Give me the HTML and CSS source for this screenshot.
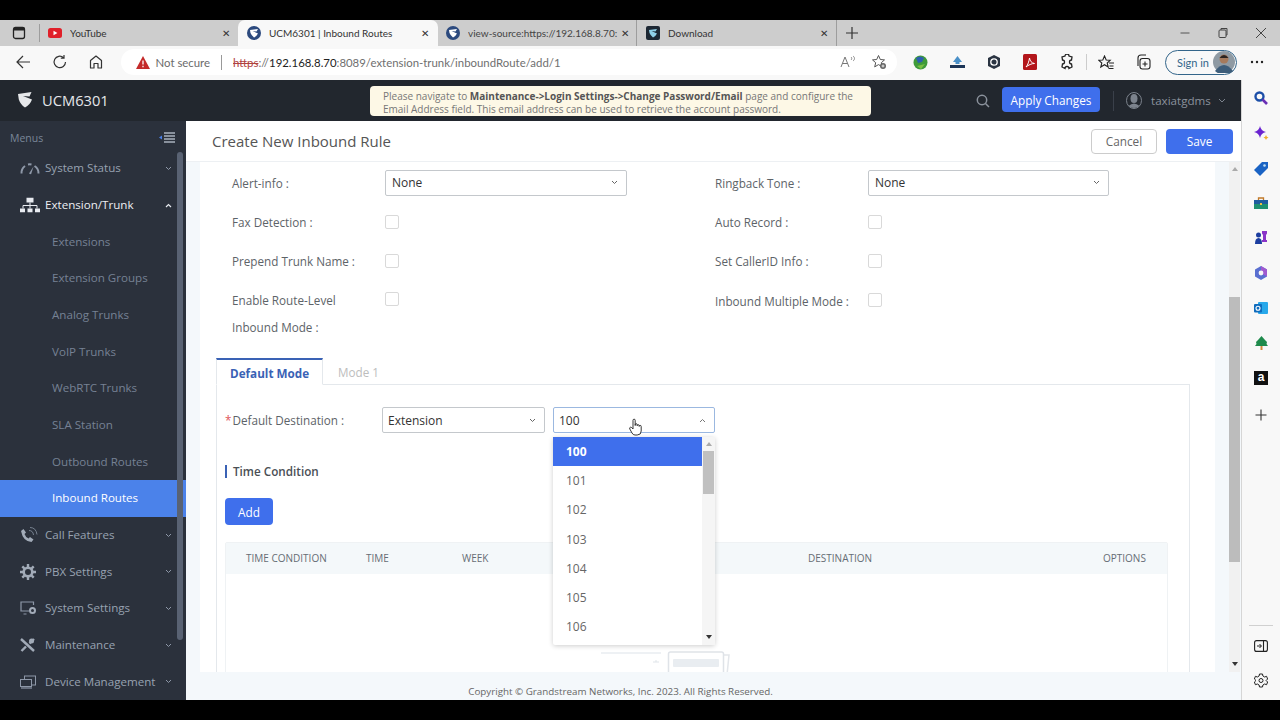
FILE: index.html
```html
<!DOCTYPE html>
<html lang="en">
<head>
    <meta charset="UTF-8">
    <title>UCM6301 | Inbound Routes</title>
    <link rel="stylesheet" href="styles.css">
</head>
<body>
<div class="browser">
    <!-- tab strip -->
    <div class="tabstrip">
        <div class="tab-menu">
            <svg width="14" height="14" viewBox="0 0 14 14"><rect x="1.5" y="1.5" width="11" height="11" rx="2" fill="none" stroke="#222" stroke-width="1.3"/><rect x="1.5" y="1.5" width="11" height="3" fill="#222"/></svg>
        </div>
        <div class="tab tab-first">
            <svg class="tab-icon" width="14" height="14" viewBox="0 0 14 14"><rect y="2" width="14" height="10" rx="2.5" fill="#e0202a"/><path d="M5.5 4.8v4.4L9.4 7z" fill="#fff"/></svg>
            <span class="tab-title">YouTube</span>
            <span class="tab-close">✕</span>
        </div>
        <div class="tab tab-active">
            <svg class="tab-icon" width="14" height="14" viewBox="0 0 14 14"><circle cx="7" cy="7" r="7" fill="#2c4a7e"/><path d="M3 4 11 3 9.500 5.500 5.500 5l5.500 2.500Q9.500 10.500 7 11.500 4.500 9.500 3.500 7z" fill="#fff"/></svg>
            <span class="tab-title">UCM6301 | Inbound Routes</span>
            <span class="tab-close">✕</span>
        </div>
        <div class="tab tab-third">
            <svg class="tab-icon" width="14" height="14" viewBox="0 0 14 14"><circle cx="7" cy="7" r="7" fill="#2c4a7e"/><path d="M3 4 11 3 9.500 5.500 5.500 5l5.500 2.500Q9.500 10.500 7 11.500 4.500 9.500 3.500 7z" fill="#fff"/></svg>
            <span class="tab-title">view-source:https://192.168.8.70:</span>
            <span class="tab-close">✕</span>
        </div>
        <div class="tab tab-fourth">
            <svg class="tab-icon" width="14" height="14" viewBox="0 0 14 14"><rect width="14" height="14" rx="2" fill="#1c2733"/><path d="M3 4 11 3 9.500 5.500 5.500 5l5.500 2.500Q9.500 10.500 7 11.500 4.500 9.500 3.500 7z" fill="#8fd0e8"/></svg>
            <span class="tab-title">Download</span>
            <span class="tab-close">✕</span>
        </div>
        <span class="tab-plus">
            <svg width="14" height="14" viewBox="0 0 14 14"><path d="M7 1v12M1 7h12" stroke="#333" stroke-width="1.2"/></svg>
        </span>
        <div class="win-controls">
            <svg width="12" height="12" viewBox="0 0 12 12"><path d="M1.5 6h9" stroke="#555"/></svg>
            <svg width="12" height="12" viewBox="0 0 12 12"><rect x="2" y="3" width="7" height="7.5" rx="1" fill="none" stroke="#444"/><path d="M4 3V1.5h6V8H9" fill="none" stroke="#444"/></svg>
            <svg width="12" height="12" viewBox="0 0 12 12"><path d="M1 1l10 10M11 1 1 11" stroke="#444"/></svg>
        </div>
    </div>

    <!-- address bar -->
    <div class="toolbar">
        <span class="tool-btn"><svg width="16" height="16" viewBox="0 0 16 16"><path d="M15 8H2M8 2 2 8l6 6" fill="none" stroke="#333" stroke-width="1.2"/></svg></span>
        <span class="tool-btn"><svg width="16" height="16" viewBox="0 0 16 16"><path d="M13.5 8A5.7 5.7 0 1 1 11.5 3.6M12 1v3.2H8.800" fill="none" stroke="#333" stroke-width="1.2"/></svg></span>
        <span class="tool-btn"><svg width="16" height="16" viewBox="0 0 16 16"><path d="M2.500 14V6.500L8 2l5.500 4.500V14h-3.500V9.500H6V14z" fill="none" stroke="#333" stroke-width="1.2" stroke-linejoin="round"/></svg></span>
        <div class="address">
            <svg width="14" height="13" viewBox="0 0 14 13"><path d="M7 0l7 13H0z" fill="#c42b2b"/><path d="M7 4.500v4M7 9.800v1.400" stroke="#fff" stroke-width="1.300"/></svg>
            <span class="not-secure">Not secure</span>
            <span class="addr-sep"></span>
            <span class="url"><span class="url-https">https</span><span class="url-dim">://</span><span class="url-host">192.168.8.70</span><span class="url-dim">:8089/extension-trunk/inboundRoute/add/1</span></span>
            <span class="addr-right">
                <svg width="16" height="14" viewBox="0 0 16 14"><path d="M1 12 5 2l4 10M2.500 8.500h5" fill="none" stroke="#777"/><path d="M11 2c1 .8 1 2.200 0 3M13 1c2 1.500 2 3.500 0 5" fill="none" stroke="#888"/></svg>
                <svg width="16" height="16" viewBox="0 0 16 16"><path d="M7.500 1.500 9.300 5.500l4.200.4-3.200 2.800 1 4.200-3.800-2.300-3.800 2.300 1-4.200L1.500 5.900l4.200-.4z" fill="none" stroke="#555"/><circle cx="12" cy="12" r="3" fill="#666"/><path d="M12 10.500v3M10.500 12h3" stroke="#fff" stroke-width=".8"/></svg>
            </span>
        </div>
        <div class="ext-icons">
            <span class="tool-btn"><svg width="15" height="15" viewBox="0 0 15 15"><circle cx="7.500" cy="7.500" r="7" fill="#3f9b3a"/><path d="M3 3q4-3 8 0l-2 4-4 1z" fill="#2d5fb0"/><path d="M4 11l4 3 4-5z" fill="#7bc043"/></svg></span>
            <span class="tool-btn"><svg width="15" height="13" viewBox="0 0 15 13"><path d="M7.500 0 12 6H3z" fill="#4a90c8"/><rect x="5.500" y="5" width="4" height="3" fill="#4a90c8"/><path d="M0 9h15v3H0z" fill="#1d3557"/></svg></span>
            <span class="tool-btn"><svg width="14" height="16" viewBox="0 0 14 16"><path d="M7 1 13 4v8l-6 3-6-3V4z" fill="#2a3442"/><circle cx="7" cy="8" r="3.200" fill="none" stroke="#fff" stroke-width="1.300"/></svg></span>
            <span class="tool-btn"><svg width="14" height="16" viewBox="0 0 14 16"><rect width="14" height="16" rx="1.500" fill="#b3161b"/><path d="M3 13c2-2 3-6 3.500-9 .5 3 2 5 5 5.500-3 0-6 1.500-8.500 3.500z" fill="none" stroke="#fff"/></svg></span>
            <span class="tool-btn"><svg width="16" height="16" viewBox="0 0 16 16"><path d="M6 2a2 2 0 0 1 4 0l3 1-.5 3a2 2 0 0 0 0 4l.5 3-3 1.500a2 2 0 0 0-4 0L3 13l.500-3a2 2 0 0 0 0-4L3 3z" fill="none" stroke="#222" stroke-width="1.300"/></svg></span>
            <span class="ext-sep"></span>
            <span class="tool-btn tool-fav"><svg width="16" height="15" viewBox="0 0 16 15"><path d="M6.500 1 8.200 5l4 .3-3 2.700 1 4-3.700-2.300L2.800 12l1-4-3-2.700 4-.3z" fill="none" stroke="#222" stroke-width="1.100"/><path d="M11 8h5M11.500 11h4M10.500 13.500h5" stroke="#222"/></svg></span>
            <span class="tool-btn"><svg width="16" height="16" viewBox="0 0 16 16"><rect x="5" y="4.500" width="10" height="10.500" rx="2.500" fill="none" stroke="#222" stroke-width="1.100"/><path d="M3 12V4a3 3 0 0 1 3-3h5M10 7.500v5M7.500 10h5" fill="none" stroke="#222" stroke-width="1.100"/></svg></span>
            <div class="sign-in">
                <span>Sign in</span>
                <svg width="22" height="22" viewBox="0 0 22 22"><circle cx="11" cy="11" r="11" fill="#8f9aa3"/><path d="M2 20q9-12 18 0l-4 3H6z" fill="#3d5d7a"/><circle cx="11" cy="8" r="4.500" fill="#a57a5c"/><path d="M6.500 7q4.500-6 9 0z" fill="#2a2320"/></svg>
            </div>
            <span class="dots">
                <svg width="14" height="4" viewBox="0 0 14 4"><circle cx="2" cy="2" r="1.200" fill="#222"/><circle cx="7" cy="2" r="1.200" fill="#222"/><circle cx="12" cy="2" r="1.200" fill="#222"/></svg>
            </span>
        </div>
    </div>

    <div class="app-row">
        <div class="app">
            <!-- app header -->
            <header class="topbar">
                <div class="brand">
                    <svg width="16" height="17" viewBox="0 0 16 17"><path d="M1 3 14.500 1 12.500 5.500 6 5l9 3.500Q13 14 8 16.500 3.500 13.500 1.800 8.500z" fill="#e6e8ea"/></svg>
                    <span>UCM6301</span>
                </div>
                <div class="notice">Please navigate to <b>Maintenance-&gt;Login Settings-&gt;Change Password/Email</b> page and configure the Email Address field. This email address can be used to retrieve the account password.</div>
                <svg class="top-search" width="14" height="14" viewBox="0 0 14 14"><circle cx="6" cy="6" r="4.700" fill="none" stroke="#8b929c" stroke-width="1.500"/><path d="M9.500 9.500 13 13" stroke="#8b929c" stroke-width="1.500"/></svg>
                <button class="btn btn-apply">Apply Changes</button>
                <span class="top-sep"></span>
                <svg class="top-user" width="16" height="17" viewBox="0 0 16 17"><ellipse cx="8" cy="8.500" rx="7.500" ry="8" fill="none" stroke="#7c838d"/><ellipse cx="8" cy="6.500" rx="3.500" ry="4.500" fill="#7c838d"/><path d="M2.500 14q5.500-5 11 0-5.500 4-11 0z" fill="#7c838d"/></svg>
                <span class="top-name">taxiatgdms</span>
                <svg class="top-caret" width="8" height="5" viewBox="0 0 8 5"><path d="M1 1l3 3 3-3" fill="none" stroke="#7c838d"/></svg>
            </header>

            <div class="app-body">
                <!-- left menu -->
                <nav class="sidebar">
                    <div class="menus-head">
                        <span>Menus</span>
                        <svg width="16" height="11" viewBox="0 0 16 11"><path d="M5 1h11M5 4h11M5 7h11M5 10h11" stroke="#a9b1bd" stroke-width="1.300"/><path d="M3 3.500v4L0 5.500z" fill="#4a80e8"/></svg>
                    </div>
                    <div class="menu-item">
                        <svg class="menu-icon" width="20" height="13" viewBox="0 0 20 13"><path d="M1.500 12A8.500 8.500 0 0 1 5 4.500M8 3a8.500 8.500 0 0 1 3.500 0M14.500 4.500A8.500 8.500 0 0 1 18.500 12" fill="none" stroke="#8e98a8" stroke-width="2"/><path d="M9 12 13.500 5l-2.500 8z" fill="#8e98a8"/></svg>
                        <span class="menu-label">System Status</span>
                        <svg class="chev" width="7" height="5" viewBox="0 0 7 5"><path d="M1 1l2.500 2.500L6 1" fill="none" stroke="#8e98a8"/></svg>
                    </div>
                    <div class="menu-item menu-open">
                        <svg class="menu-icon" width="20" height="15" viewBox="0 0 20 15"><rect x="6.500" y="0" width="7" height="5" fill="#e8ebf0"/><path d="M10 5v3M3 11V8h14v3M10 8v3" fill="none" stroke="#e8ebf0"/><rect x="0" y="11" width="5" height="4" fill="#e8ebf0"/><rect x="7.500" y="11" width="5" height="4" fill="#e8ebf0"/><rect x="15" y="11" width="5" height="4" fill="#e8ebf0"/></svg>
                        <span class="menu-label">Extension/Trunk</span>
                        <svg class="chev" width="7" height="5" viewBox="0 0 7 5"><path d="M1 4l2.500-2.500L6 4" fill="none" stroke="#e8ebf0" stroke-width="1.200"/></svg>
                    </div>
                    <div class="menu-item menu-sub">Extensions</div>
                    <div class="menu-item menu-sub">Extension Groups</div>
                    <div class="menu-item menu-sub">Analog Trunks</div>
                    <div class="menu-item menu-sub">VoIP Trunks</div>
                    <div class="menu-item menu-sub">WebRTC Trunks</div>
                    <div class="menu-item menu-sub">SLA Station</div>
                    <div class="menu-item menu-sub">Outbound Routes</div>
                    <div class="menu-item menu-sub menu-active">Inbound Routes</div>
                    <div class="menu-item">
                        <svg class="menu-icon" width="18" height="17" viewBox="0 0 18 17"><path d="M1 4.500 3.500 2.500l2.500 3.500-1.500 1.500q1 3 4 4.500L10 10.500l3.500 2.500-2 2.500Q3 15 1 4.500z" fill="#a2abb8"/><path d="M9 4q4 0 4.500 4.500M10 1q6 0 7 7" fill="none" stroke="#77818f"/></svg>
                        <span class="menu-label">Call Features</span>
                        <svg class="chev" width="7" height="5" viewBox="0 0 7 5"><path d="M1 1l2.500 2.500L6 1" fill="none" stroke="#8e98a8"/></svg>
                    </div>
                    <div class="menu-item">
                        <svg class="menu-icon" width="16" height="16" viewBox="0 0 16 16"><circle cx="8" cy="8" r="4.300" fill="none" stroke="#a2abb8" stroke-width="2.600"/><path d="M8 0v3M8 13v3M0 8h3M13 8h3M2.300 2.300l2 2M11.700 11.700l2 2M2.300 13.700l2-2M11.700 4.300l2-2" stroke="#a2abb8" stroke-width="2.400"/></svg>
                        <span class="menu-label">PBX Settings</span>
                        <svg class="chev" width="7" height="5" viewBox="0 0 7 5"><path d="M1 1l2.500 2.500L6 1" fill="none" stroke="#8e98a8"/></svg>
                    </div>
                    <div class="menu-item">
                        <svg class="menu-icon" width="17" height="14" viewBox="0 0 17 14"><path d="M9 10H1V1h12.500v3M3.500 13h3" fill="none" stroke="#8e98a8" stroke-width="1.200"/><circle cx="12.500" cy="9.500" r="2.500" fill="none" stroke="#a2abb8" stroke-width="2"/></svg>
                        <span class="menu-label">System Settings</span>
                        <svg class="chev" width="7" height="5" viewBox="0 0 7 5"><path d="M1 1l2.500 2.500L6 1" fill="none" stroke="#8e98a8"/></svg>
                    </div>
                    <div class="menu-item">
                        <svg class="menu-icon" width="15" height="14" viewBox="0 0 15 14"><path d="M1 1l13 12" stroke="#a2abb8" stroke-width="2.400"/><path d="M14 1 9.500 5.500M6 8.500 1.500 13" stroke="#a2abb8" stroke-width="2.400"/><circle cx="11.500" cy="3" r="2.500" fill="#a2abb8"/></svg>
                        <span class="menu-label">Maintenance</span>
                        <svg class="chev" width="7" height="5" viewBox="0 0 7 5"><path d="M1 1l2.500 2.500L6 1" fill="none" stroke="#8e98a8"/></svg>
                    </div>
                    <div class="menu-item">
                        <svg class="menu-icon" width="16" height="14" viewBox="0 0 16 14"><rect x="4.500" y="1" width="11" height="9" fill="none" stroke="#8e98a8"/><rect x=".5" y="4.500" width="11" height="7" fill="#2b313c" stroke="#8e98a8"/><path d="M1 13h11" stroke="#8e98a8" stroke-width="1.200"/></svg>
                        <span class="menu-label">Device Management</span>
                        <svg class="chev" width="7" height="5" viewBox="0 0 7 5"><path d="M1 1l2.500 2.500L6 1" fill="none" stroke="#8e98a8"/></svg>
                    </div>
                    <span class="side-thumb"></span>
                </nav>

                <main class="content">
                    <div class="page-head">
                        <h1>Create New Inbound Rule</h1>
                        <div class="page-actions">
                            <button class="btn btn-cancel">Cancel</button>
                            <button class="btn btn-save">Save</button>
                        </div>
                    </div>

                    <div class="scroll-area">
                        <div class="card">
                            <div class="form-grid">
                                <div class="field">
                                    <label>Alert-info</label>
                                    <div class="select select-wide">None<svg width="7" height="5" viewBox="0 0 7 5"><path d="M1 1l2.500 2.500L6 1" fill="none" stroke="#666"/></svg></div>
                                </div>
                                <div class="field">
                                    <label>Ringback Tone</label>
                                    <div class="select select-wide select-right">None<svg width="7" height="5" viewBox="0 0 7 5"><path d="M1 1l2.500 2.500L6 1" fill="none" stroke="#666"/></svg></div>
                                </div>
                                <div class="field"><label>Fax Detection</label><span class="check"></span></div>
                                <div class="field"><label>Auto Record</label><span class="check"></span></div>
                                <div class="field"><label>Prepend Trunk Name</label><span class="check"></span></div>
                                <div class="field"><label>Set CallerID Info</label><span class="check"></span></div>
                                <div class="field field-tall">
                                    <label>Enable Route-Level Inbound Mode</label>
                                    <span class="check"></span>
                                </div>
                                <div class="field field-top"><label>Inbound Multiple Mode</label><span class="check"></span></div>
                            </div>

                            <div class="mode-tabs">
                                <span class="mode-tab mode-tab-active">Default Mode</span>
                                <span class="mode-tab">Mode 1</span>
                            </div>

                            <div class="mode-panel">
                                <div class="dest-row">
                                    <label class="dest-label"><i>*</i> Default Destination</label>
                                    <div class="select select-dest">Extension<svg width="7" height="5" viewBox="0 0 7 5"><path d="M1 1l2.500 2.500L6 1" fill="none" stroke="#666"/></svg></div>
                                    <div class="select-wrap">
                                        <div class="select select-open">100<svg width="7" height="5" viewBox="0 0 7 5"><path d="M1 4l2.500-2.500L6 4" fill="none" stroke="#777"/></svg></div>
                                        <div class="dropdown">
                                            <ul class="options">
                                                <li class="selected">100</li>
                                                <li>101</li>
                                                <li>102</li>
                                                <li>103</li>
                                                <li>104</li>
                                                <li>105</li>
                                                <li>106</li>
                                            </ul>
                                            <div class="drop-scroll">
                                                <span class="arrow-up"></span>
                                                <span class="drop-thumb"></span>
                                                <span class="arrow-down"></span>
                                            </div>
                                        </div>
                                        <svg class="hand" width="14" height="18" viewBox="0 0 14 18"><path d="M4 9V2.300a1.100 1.100 0 0 1 2.200 0V7.500V6.700a1 1 0 0 1 2 0v1a1 1 0 0 1 2 0v.7a1 1 0 0 1 2 0V13q0 4-4 4H6q-2 0-3-2L.8 11q-.6-1.500.8-1.800Q2.600 9 4 11z" fill="#fff" stroke="#222" stroke-width=".9"/></svg>
                                    </div>
                                </div>

                                <div class="section-title">Time Condition</div>
                                <button class="btn btn-add">Add</button>

                                <div class="time-table">
                                    <div class="time-head">
                                        <span>Time Condition</span>
                                        <span>Time</span>
                                        <span>Week</span>
                                        <span>Destination</span>
                                        <span>Options</span>
                                    </div>
                                    <div class="time-empty">
                                        <svg width="130" height="24" viewBox="0 0 130 24"><path d="M0 2h60" stroke="#eef1f4" stroke-width="2"/><path d="M54 10h2M52 11h6" stroke="#dfe4e9"/><path d="M122 4h6l-2 20" fill="none" stroke="#e3e6ea" stroke-width="1.500"/><rect x="67.500" y="1" width="55" height="24" rx="2" fill="#fff" stroke="#dfe3e8" stroke-width="1.500"/><rect x="72" y="8" width="46" height="8" rx="1" fill="#e9edf1"/></svg>
                                    </div>
                                </div>
                            </div>
                        </div>

                        <div class="page-scroll">
                            <span class="arrow-up"></span>
                            <span class="page-thumb"></span>
                            <span class="arrow-down"></span>
                        </div>
                    </div>

                    <footer class="footer">Copyright © Grandstream Networks, Inc. 2023. All Rights Reserved.</footer>
                </main>
            </div>
        </div>

        <!-- edge sidebar -->
        <aside class="edge">
            <svg width="14" height="14" viewBox="0 0 14 14"><circle cx="5.500" cy="5.500" r="4" fill="none" stroke="#1c4fa8" stroke-width="2.400"/><path d="M8.500 8.500 13 13" stroke="#6a2fb5" stroke-width="2.600"/></svg>
            <svg width="15" height="15" viewBox="0 0 15 15"><path d="M6 0q1 5 6 6-5 1-6 6-1-5-6-6 5-1 6-6z" fill="#6a23d0"/><path d="M12 9q.4 2 2.500 2.500-2.100.5-2.500 2.500-.4-2-2.500-2.500 2.100-.5 2.500-2.500z" fill="#f0b030"/></svg>
            <svg width="14" height="14" viewBox="0 0 14 14"><path d="M8 0h6v6l-8 8-6-6z" fill="#1a63c4"/><circle cx="10.500" cy="3.500" r="1.300" fill="#bfe0f5"/></svg>
            <svg width="14" height="12" viewBox="0 0 14 12"><path d="M4.500 3V1h5v2" fill="none" stroke="#c0792a" stroke-width="1.300"/><rect y="3" width="14" height="4.500" fill="#1f5c9e"/><rect y="7" width="14" height="5" fill="#1f8f70"/><rect x="6" y="6" width="2" height="2" fill="#f0c040"/></svg>
            <svg width="14" height="15" viewBox="0 0 14 15"><circle cx="4.500" cy="5" r="2.500" fill="#1c3ea0"/><path d="M1 14q0-6 3.500-6T8 14z" fill="#1c3ea0"/><path d="M8 1h5v2.500L12 5v5h1v2H8v-2h1V5L8 3.500z" fill="#8a35c8"/></svg>
            <svg width="14" height="14" viewBox="0 0 14 14"><path d="M7 0 13 3.500v7L7 14 1 10.500v-7z" fill="#5a6fd0"/><path d="M7 0 13 3.500v7L7 7z" fill="#a05ad0"/><circle cx="7" cy="7" r="2.400" fill="#f7f7f7"/></svg>
            <svg width="14" height="14" viewBox="0 0 14 14"><rect x="4" y="1" width="10" height="12" rx="1" fill="#28a8ea"/><rect y="3" width="8" height="8.500" rx="1" fill="#0f6cbd"/><circle cx="4" cy="7.200" r="2" fill="none" stroke="#fff" stroke-width="1.100"/></svg>
            <svg width="13" height="14" viewBox="0 0 13 14"><path d="M6.500 0 10 4l2 2-.5 2 1.500 2H0l1.500-2L1 6l2-2z" fill="#1e8a4c"/><rect x="5.500" y="10" width="2" height="4" fill="#d08a3c"/></svg>
            <span class="amazon">a</span>
            <svg class="edge-plus" width="12" height="12" viewBox="0 0 12 12"><path d="M6 .5v11M.5 6h11" stroke="#333" stroke-width="1.100"/></svg>
            <span class="edge-fill"></span>
            <span class="edge-sep"></span>
            <svg width="14" height="12" viewBox="0 0 14 12"><rect x=".6" y=".6" width="12.800" height="10.800" rx="2" fill="none" stroke="#222" stroke-width="1.100"/><path d="M9.500 1v10" stroke="#222" stroke-width="1.100"/><path d="M3 6h4M5.500 4l2 2-2 2" fill="none" stroke="#222"/></svg>
            <svg width="14" height="15" viewBox="0 0 14 15"><circle cx="7" cy="7.500" r="2" fill="none" stroke="#222"/><path d="M5.500 1h3l.4 2 1.700 1 2-.7 1 2.700-1.500 1.500 1.500 1.500-1 2.700-2-.7-1.700 1-.4 2h-3l-.4-2-1.700-1-2 .7-1-2.700L2 7.500.4 6l1-2.700 2 .7 1.700-1z" fill="none" stroke="#222"/></svg>
        </aside>
    </div>
</div>
</body>
</html>
```
FILE: styles.css
```css
* {
    box-sizing: border-box;
}

body {
    margin: 0;
    height: 720px;
    padding: 20px 0;
    background: #000;
    overflow: hidden;
    font-family: "Open Sans", Arial, sans-serif;
    font-size: 11.7px;
    color: #5d6368;
}

.browser {
    height: 680px;
    display: flex;
    flex-direction: column;
}

/* tab strip */
.tabstrip {
    height: 26px;
    flex: none;
    display: flex;
    align-items: stretch;
    background: #cdcdcd;
}

.tab-menu {
    width: 40px;
    display: flex;
    align-items: center;
    justify-content: center;
    padding-right: 1px;
    border-right: 1px solid #9d9d9d;
    margin: 4px 0;
}

.tab {
    display: flex;
    align-items: center;
    font-family: Lato, Arial, sans-serif;
    font-size: 10px;
    color: #333;
}

.tab-icon {
    flex: none;
}

.tab-title {
    flex: 1;
    white-space: nowrap;
    overflow: hidden;
}

.tab-close {
    flex: none;
    width: 12px;
    text-align: center;
    font-size: 10px;
    color: #333;
}

.tab-first {
    width: 198px;
    padding: 0 6px 0 8px;
}

.tab-first .tab-title,
.tab-active .tab-title,
.tab-fourth .tab-title {
    margin-left: 8px;
}

.tab-active {
    width: 200px;
    padding: 0 7px 0 9px;
    background: #f8f8f8;
    border-radius: 7px 7px 0 0;
}

.tab-third {
    width: 199px;
    padding: 0 5px 0 8px;
    border-right: 1px solid #9d9d9d;
    margin: 0;
}

.tab-third .tab-title {
    margin-left: 8px;
    color: #444;
}

.tab-fourth {
    width: 200px;
    padding: 0 6px 0 9px;
    border-right: 1px solid #9d9d9d;
}

.tab-plus {
    display: flex;
    align-items: center;
    margin-left: 8px;
}

.win-controls {
    margin-left: auto;
    display: flex;
    align-items: center;
    gap: 26px;
    padding-right: 13px;
}

/* address bar */
.toolbar {
    height: 34px;
    flex: none;
    display: flex;
    align-items: center;
    padding: 0 0 2px 5px;
    background: #f8f8f8;
}

.tool-btn {
    width: 36.5px;
    display: flex;
    justify-content: center;
    flex: none;
}

.address {
    width: 776px;
    height: 26px;
    margin-left: 6px;
    flex: none;
    display: flex;
    align-items: center;
    padding-left: 15px;
    background: #fff;
    border-radius: 13px;
    font-family: Lato, Arial, sans-serif;
    font-size: 11.4px;
}

.not-secure {
    margin-left: 6px;
    color: #6b6b6b;
}

.addr-sep {
    width: 1px;
    height: 15px;
    margin: 0 11px 0 11px;
    background: #999;
}

.url-https {
    color: #b0413e;
    text-decoration: line-through;
}

.url-dim {
    color: #6f6f6f;
}

.url-host {
    color: #222;
}

.addr-right {
    margin-left: auto;
    display: flex;
    align-items: center;
    gap: 15px;
    padding-right: 10px;
}

.ext-icons {
    display: flex;
    align-items: center;
    margin-left: 6px;
}

.ext-sep {
    width: 1px;
    height: 16px;
    margin: 0 0 0 1px;
    background: #ccc;
}

.tool-fav {
    margin-left: 1px;
}

.sign-in {
    width: 72px;
    height: 25px;
    flex: none;
    margin-left: 4px;
    display: flex;
    align-items: center;
    justify-content: space-between;
    padding: 0 1px 0 11px;
    border: 1px solid #33658a;
    border-radius: 13px;
    font-family: Lato, Arial, sans-serif;
    font-size: 11px;
    color: #33658a;
}

.dots {
    margin-left: 13px;
    display: flex;
}

/* app frame */
.app-row {
    flex: 1;
    min-height: 0;
    display: flex;
}

.app {
    width: 1241px;
    flex: none;
    display: flex;
    flex-direction: column;
}

.topbar {
    height: 41px;
    flex: none;
    display: flex;
    align-items: center;
    background: #22272e;
}

.brand {
    width: 370px;
    flex: none;
    display: flex;
    align-items: center;
    gap: 9px;
    padding: 0 0 2px 17px;
    font-size: 14.7px;
    color: #e4e6e9;
}

.notice {
    width: 501px;
    height: 30px;
    flex: none;
    padding: 4px 13px;
    background: #fdf8e6;
    border-radius: 4px;
    font-size: 10px;
    line-height: 13px;
    color: #777;
}

.notice b {
    color: #555;
}

.top-search {
    margin-left: 105px;
    flex: none;
}

.btn {
    display: block;
    border: none;
    border-radius: 4px;
    padding: 0;
    font-family: inherit;
    font-size: 11.8px;
    background: #3f6fec;
    color: #fff;
}

.btn-apply {
    width: 98px;
    height: 25px;
    margin: 0 0 2px 12px;
    flex: none;
}

.top-sep {
    width: 1px;
    height: 20px;
    margin-left: 13px;
    background: #3a404a;
}

.top-user {
    margin-left: 12px;
    flex: none;
}

.top-name {
    margin-left: 9px;
    color: #8b929c;
    font-size: 11.6px;
}

.top-caret {
    margin-left: 7px;
    flex: none;
}

.app-body {
    flex: 1;
    min-height: 0;
    display: flex;
}

/* left menu */
.sidebar {
    width: 186px;
    flex: none;
    position: relative;
    background: #2b313c;
    overflow: hidden;
}

.menus-head {
    height: 29px;
    display: flex;
    align-items: center;
    justify-content: space-between;
    padding: 4px 11px 0 10px;
    font-size: 10.5px;
    color: #7a8799;
}

.menu-item {
    height: 36.67px;
    display: flex;
    align-items: center;
    position: relative;
    padding-bottom: 1px;
    font-size: 11.6px;
    color: #98a2b1;
}

.menu-icon {
    position: absolute;
    left: 20px;
    top: 50%;
    transform: translateY(-50%);
}

.menu-label {
    margin-left: 45px;
}

.chev {
    position: absolute;
    left: 165px;
    top: 16px;
}

.menu-open {
    color: #eceef2;
}

.menu-sub {
    padding-left: 52px;
    color: #768194;
}

.menu-active {
    background: #4b82ea;
    color: #fff;
}

.side-thumb {
    position: absolute;
    left: 177px;
    top: 31px;
    width: 6px;
    height: 488px;
    border-radius: 3px;
    background: #596273;
}

/* main content */
.content {
    flex: 1;
    min-width: 0;
    display: flex;
    flex-direction: column;
}

.page-head {
    height: 41px;
    flex: none;
    display: flex;
    align-items: center;
    justify-content: space-between;
    padding: 0 8px 0 26px;
    background: #fff;
    border-bottom: 1px solid #edf0f3;
}

h1 {
    margin: 0;
    font-size: 15px;
    font-weight: 400;
    color: #555;
}

.page-actions {
    display: flex;
    gap: 9px;
}

.btn-cancel,
.btn-save {
    width: 67px;
    height: 25px;
}

.btn-cancel {
    width: 66px;
    background: #fff;
    border: 1px solid #ccc;
    color: #666;
}

.scroll-area {
    flex: 1;
    min-height: 0;
    display: flex;
    padding-left: 14px;
    background: #f4f8fb;
    overflow: hidden;
}

.card {
    width: 1015px;
    flex: none;
    background: #fff;
}

.form-grid {
    display: grid;
    grid-template-columns: 483px 1fr;
    grid-template-rows: 39px 39px 39px 78px;
    padding: 1px 0 0 32px;
}

.field {
    display: flex;
    align-items: center;
}

.field label {
    width: 153px;
    flex: none;
}

.field label::after,
.dest-label::after {
    content: ":";
    margin-left: 3px;
}

.field-tall {
    align-items: flex-start;
}

.field-tall label {
    line-height: 27px;
    padding-top: 7px;
    padding-right: 30px;
}

.field-tall .check {
    margin-top: 12px;
}

.field-top {
    align-items: flex-start;
    padding-top: 13px;
}

.check {
    width: 14px;
    height: 14px;
    flex: none;
    background: #fff;
    border: 1px solid #d9d9d9;
    border-radius: 2px;
}

.select {
    height: 26px;
    display: flex;
    align-items: center;
    justify-content: space-between;
    padding: 0 8px 0 6px;
    background: #fff;
    border: 1px solid #c4c8cc;
    border-radius: 2px;
    font-size: 12px;
    color: #333;
}

.select-wide {
    width: 242px;
}

.select-wide.select-right {
    width: 241px;
}

/* mode tabs */
.mode-tabs {
    height: 27px;
    margin-left: 16px;
    width: 974px;
    display: flex;
    border-bottom: 1px solid #e4e8ec;
}

.mode-tab {
    width: 70px;
    padding: 6px 0 0 15px;
    color: #bdbdbd;
}

.mode-tab-active {
    width: 107px;
    height: 27px;
    padding: 5px 0 0 13px;
    border: 1px solid #e4e8ec;
    border-top: 2px solid #3a62b5;
    border-bottom: 1px solid #fff;
    font-weight: 700;
    color: #3a62b5;
}

.mode-panel {
    margin-left: 16px;
    width: 974px;
    height: 400px;
    padding: 22px 0 0 8px;
    border-left: 1px solid #e4e8ec;
    border-right: 1px solid #e4e8ec;
}

.dest-row {
    display: flex;
    align-items: center;
    gap: 8px;
}

.dest-label {
    width: 149px;
    flex: none;
}

.dest-label i {
    margin-right: -2px;
    font-style: normal;
    color: #e0555a;
}

.select-dest {
    width: 163px;
    padding-left: 5px;
}

.select-wrap {
    width: 162px;
    flex: none;
    position: relative;
}

.select-open {
    padding-left: 5px;
    border-color: #9bb8e0;
}

.dropdown {
    position: absolute;
    left: 0;
    top: 30px;
    width: 162px;
    height: 208px;
    display: flex;
    background: #fff;
    box-shadow: 0 1px 5px rgba(0, 0, 0, 0.2);
    border-radius: 2px;
    z-index: 2;
}

.options {
    flex: 1;
    margin: 0;
    padding: 0;
    list-style: none;
}

.options li {
    height: 29.2px;
    line-height: 29px;
    padding-left: 13px;
    font-size: 12px;
    color: #666;
}

.options .selected {
    background: #3f6fec;
    color: #fff;
    font-weight: 700;
}

.drop-scroll {
    width: 13px;
    flex: none;
    position: relative;
    background: #f5f5f5;
}

.drop-thumb {
    position: absolute;
    left: 1px;
    top: 14px;
    width: 11px;
    height: 43px;
    background: #c0c0c0;
}

.arrow-up,
.arrow-down {
    position: absolute;
    left: 50%;
    margin-left: -3px;
    width: 0;
    height: 0;
    border-left: 3px solid transparent;
    border-right: 3px solid transparent;
}

.arrow-up {
    top: 5px;
    border-bottom: 4px solid #aaa;
}

.arrow-down {
    bottom: 6px;
    border-top: 4px solid #333;
}

.hand {
    position: absolute;
    left: 76px;
    top: 11px;
    z-index: 3;
}

.section-title {
    height: 13px;
    margin-top: 32px;
    padding-left: 6px;
    border-left: 2px solid #3a62b5;
    line-height: 13px;
    font-weight: 600;
    color: #4a4f55;
}

.btn-add {
    width: 48px;
    height: 27px;
    margin-top: 20px;
}

.time-table {
    width: 943px;
    margin-top: 17px;
    height: 220px;
    border: 1px solid #eff2f4;
    border-radius: 2px 2px 0 0;
}

.time-head {
    height: 31px;
    display: grid;
    grid-template-columns: 120px 96px 346px 295px 1fr;
    align-items: center;
    padding: 0 0 2px 20px;
    background: #f4f8fa;
    font-size: 10px;
    text-transform: uppercase;
    color: #666d75;
}

.time-empty {
    padding: 77px 0 0 375px;
}

.time-empty svg {
    display: block;
}

/* page scrollbar */
.page-scroll {
    width: 11px;
    margin-left: 14px;
    flex: none;
    position: relative;
    background: #f1f1f1;
}

.page-thumb {
    position: absolute;
    left: 0;
    top: 135px;
    width: 11px;
    height: 265px;
    background: #bcbcbc;
}

.footer {
    height: 28px;
    flex: none;
    padding-right: 186px;
    background: #f4f8fb;
    text-align: center;
    line-height: 40px;
    font-size: 9.8px;
    color: #666;
}

/* edge sidebar */
.edge {
    flex: 1;
    display: flex;
    flex-direction: column;
    align-items: center;
    gap: 21px;
    padding: 11px 0 12px;
    background: #f8f8f8;
    border-left: 1px solid #d6d6d6;
}

.amazon {
    width: 14px;
    height: 14px;
    background: #111;
    color: #fff;
    font-family: "Liberation Sans", Arial, sans-serif;
    font-size: 12px;
    font-weight: 700;
    line-height: 13px;
    text-align: center;
}

.edge-plus {
    margin-top: 3px;
}

.edge-fill {
    flex: 1;
}

.edge-sep {
    width: 24px;
    height: 1px;
    margin: -7px 0;
    background: #d0d0d0;
}
```
